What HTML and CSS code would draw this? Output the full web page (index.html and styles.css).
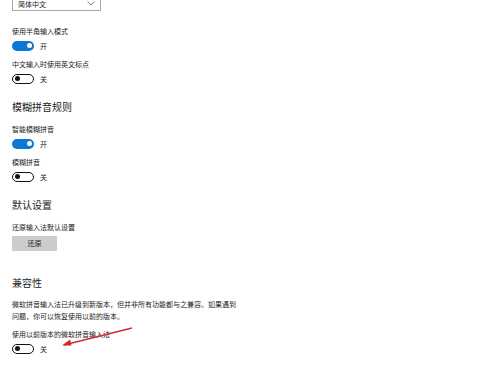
FILE: index.html
```html
<!DOCTYPE html>
<html lang="zh-CN">
<head>
<meta charset="utf-8">
<link rel="stylesheet" href="styles.css">
</head>
<body>
<div class="page">
  <div class="select">
    <span>简体中文</span>
    <svg class="chev" width="8" height="5" viewBox="0 0 8 5"><path d="M0.5 0.5 L4 4 L7.5 0.5" fill="none" stroke="#777" stroke-width="0.9"/></svg>
  </div>

  <div class="setting s-first">
    <div class="label">使用半角输入模式</div>
    <div class="trow"><span class="toggle on"></span><span class="state">开</span></div>
  </div>
  <div class="setting">
    <div class="label">中文输入时使用英文标点</div>
    <div class="trow"><span class="toggle off"></span><span class="state">关</span></div>
  </div>

  <h2 class="heading">模糊拼音规则</h2>
  <div class="setting s-after-h">
    <div class="label">智能模糊拼音</div>
    <div class="trow"><span class="toggle on"></span><span class="state">开</span></div>
  </div>
  <div class="setting">
    <div class="label">模糊拼音</div>
    <div class="trow"><span class="toggle off"></span><span class="state">关</span></div>
  </div>

  <h2 class="heading">默认设置</h2>
  <div class="setting s-after-h">
    <div class="label">还原输入法默认设置</div>
    <button class="btn">还原</button>
  </div>

  <h2 class="heading h-compat">兼容性</h2>
  <p class="para">微软拼音输入法已升级到新版本，但并非所有功能都与之兼容。如果遇到<br>问题，你可以恢复使用以前的版本。</p>
  <div class="setting s-after-p">
    <div class="label">使用以前版本的微软拼音输入法</div>
    <div class="trow"><span class="toggle off"></span><span class="state">关</span></div>
  </div>
</div>
<svg class="arrow" width="80" height="30" viewBox="0 0 80 30">
  <line x1="72" y1="2" x2="4" y2="19" stroke="#d8272f" stroke-width="1.3"/>
  <path d="M2 19.5 L10 13.5 L11.5 19.5 Z" fill="#d8272f"/>
</svg>
</body>
</html>
```
FILE: styles.css
```css
html, body {
  margin: 0;
  padding: 0;
  background: #fff;
}
body {
  width: 500px;
  height: 370px;
  overflow: hidden;
  position: relative;
  font-family: "Noto Sans CJK SC", "Noto Sans", sans-serif;
  color: #1a1a1a;
}
.page {
  display: flex;
  flex-direction: column;
  align-items: flex-start;
  padding-left: 12px;
}
.select {
  margin-top: -8px;
  display: flex;
  align-items: flex-end;
  justify-content: space-between;
  padding: 0 5px 1px 5px;
  box-sizing: border-box;
  width: 89px;
  height: 19px;
  border: 1px solid #a8a8a8;
  font-size: 7px;
  line-height: 10px;
}
.chev {
  margin-bottom: 3px;
}
.setting {
  display: flex;
  flex-direction: column;
  align-items: flex-start;
  margin-top: 8px;
}
.s-first { margin-top: 15px; }
.s-after-h { margin-top: 10px; }
.s-after-p { margin-top: 7px; }
.label {
  font-size: 7px;
  line-height: 10px;
  height: 10px;
  white-space: nowrap;
}
.trow {
  display: flex;
  align-items: center;
  margin-top: 4px;
  height: 11px;
}
.toggle {
  width: 22px;
  height: 10px;
  border-radius: 6px;
  box-sizing: border-box;
  display: flex;
  align-items: center;
}
.toggle::after {
  content: "";
  width: 5px;
  height: 5px;
  border-radius: 50%;
}
.toggle.on {
  background: #0a78d4;
  justify-content: flex-end;
  padding-right: 2.5px;
}
.toggle.on::after { background: #fff; }
.toggle.off {
  border: 1.3px solid #111;
  justify-content: flex-start;
  padding-left: 2px;
}
.toggle.off::after { background: #111; }
.state {
  font-size: 7px;
  line-height: 10px;
  margin-left: 6px;
}
.heading {
  margin: 16px 0 0 0;
  font-weight: normal;
  font-size: 10px;
  line-height: 14px;
  color: #222;
}
.h-compat { margin-top: 25px; }
.btn {
  margin-top: 4px;
  width: 45px;
  height: 15px;
  border: none;
  background: #cccccc;
  font-family: inherit;
  font-size: 7px;
  line-height: 15px;
  padding: 0;
  color: #222;
}
.para {
  margin: 8px 0 0 0;
  font-size: 7px;
  line-height: 12px;
}
.arrow {
  position: absolute;
  left: 60px;
  top: 326px;
}
```
